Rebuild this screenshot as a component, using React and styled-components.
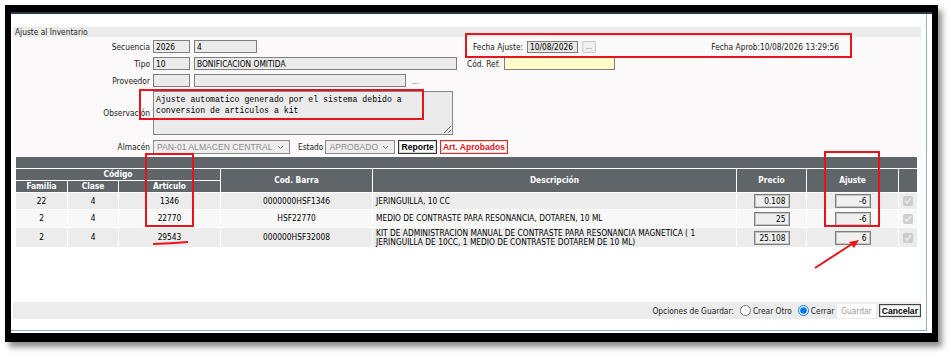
import React from "react";
import styled, { createGlobalStyle } from "styled-components";

const sans = `"DejaVu Sans Condensed", "DejaVu Sans", "Liberation Sans", sans-serif`;
const mono = `"Liberation Mono", "DejaVu Sans Mono", monospace`;

const GlobalStyle = createGlobalStyle`
  body {
    margin: 0;
    background: #fff;
    font-family: ${sans};
    font-size: 8.3px;
    color: #1a1a1a;
  }
`;

const Stage = styled.div`
  position: relative;
  width: 951px;
  height: 360px;
  padding: 5px 0 0 5px;
  box-sizing: border-box;
`;

const Frame = styled.div`
  width: 933px;
  height: 337px;
  box-sizing: border-box;
  background: #000;
  padding: 7px 6px 9px 6px;
  display: flex;
  flex-direction: column;
  box-shadow: 4px 5px 6px rgba(0, 0, 0, 0.45);
`;

const TopLine = styled.div`
  height: 2px;
  background: #2b3a46;
`;

const Window = styled.div`
  flex: 1;
  background: #fff;
  padding: 0 5px 2px 0;
  display: flex;
`;

const Panel = styled.div`
  flex: 1;
  border-right: 1px solid #8fb1c1;
  border-bottom: 1px solid #8fb1c1;
  padding: 13px 5px 11px 2px;
  display: flex;
  flex-direction: column;
`;

const Title = styled.div`
  height: 10px;
  line-height: 10px;
  background: #ececec;
  padding-left: 2px;
  color: #222;
`;

const FormArea = styled.div`
  background: #fbf9f9;
  padding: 3px 0 3px 0;
`;

const Row = styled.div`
  display: flex;
  align-items: center;
  height: ${(p) => p.$h || 13}px;
  margin-bottom: ${(p) => (p.$mb === undefined ? 4 : p.$mb)}px;
`;

const Label = styled.span`
  width: 140px;
  box-sizing: border-box;
  padding-right: 3px;
  text-align: right;
  color: #222;
  flex: none;
`;

const Middle = styled.div`
  width: 310px;
  display: flex;
  align-items: center;
  gap: 4px;
  flex: none;
`;

const Right = styled.div`
  flex: 1;
  display: flex;
  align-items: center;
  gap: 4px;
  padding-left: ${(p) => p.$pl || 0}px;
  padding-right: ${(p) => p.$pr || 0}px;
`;

const Field = styled.input`
  width: ${(p) => p.$w}px;
  height: ${(p) => p.$hh || 13}px;
  box-sizing: border-box;
  border: 1px solid #7e7e7e;
  box-shadow: ${(p) => (p.$deep ? "inset 0 0 0 1px #c4c4c4" : "none")};
  background: ${(p) => p.$bg || "#ebebeb"};
  font-family: ${sans};
  font-size: 8.3px;
  color: #000;
  padding: 0 ${(p) => (p.$align === "right" ? 3 : 2)}px;
  margin: 0;
  outline: none;
  text-align: ${(p) => p.$align || "left"};
  vertical-align: middle;
`;

const Dots = styled.button`
  height: 12px;
  width: 14px;
  padding: 0;
  border: 1px solid #c9c9c9;
  border-radius: 2px;
  background: #f1f1f1;
  color: #555;
  font-size: 7px;
  line-height: 8px;
  font-family: ${sans};
`;

const PlainDots = styled.span`
  color: #555;
  margin-left: 2px;
`;

const Memo = styled.textarea`
  width: 300px;
  height: 44px;
  box-sizing: border-box;
  border: 1px solid #858585;
  background: #ebebeb;
  font-family: ${mono};
  font-size: 8.2px;
  line-height: 11px;
  color: #000;
  padding: 2px 2px;
  margin: 0;
  resize: both;
  outline: none;
`;

const Select = styled.div`
  width: ${(p) => p.$w}px;
  height: 14px;
  box-sizing: border-box;
  border: 1px solid #8a8a8a;
  background: #eeeeee;
  color: #8d8d8d;
  display: flex;
  align-items: center;
  justify-content: space-between;
  padding: 0 5px 0 3px;
  font-family: "Liberation Sans", sans-serif;
  font-size: 8.6px;
  white-space: nowrap;
  overflow: hidden;
  flex: none;
`;

const SmallLabel = styled.span`
  margin: 0 2px 0 ${(p) => p.$ml || 0}px;
  color: #222;
`;

const Btn = styled.button`
  height: 14px;
  padding: 0 2px;
  box-sizing: border-box;
  background: #fff;
  border: 1px solid ${(p) => (p.$red ? "#c33" : "#333")};
  box-shadow: inset 0 0 0 1px #d8d8d8;
  color: ${(p) => (p.$red ? "#e3111a" : "#000")};
  font-family: "Liberation Sans", sans-serif;
  font-weight: bold;
  font-size: 8.6px;
  margin-left: ${(p) => p.$ml || 0}px;
`;

const TableWrap = styled.div`
  padding-left: 2px;
  margin-top: -1px;
`;

const Grid = styled.table`
  width: 903px;
  table-layout: fixed;
  border-collapse: separate;
  border-spacing: 1px;
  background: #fff;
  font-size: 8.3px;
`;

const Th = styled.th`
  background: #5f6569;
  color: #fff;
  font-weight: bold;
  text-align: center;
  height: 11px;
  line-height: 11px;
  padding: 0;
`;

const Tr = styled.tr`
  background: ${(p) => (p.$alt ? "#f8f8f8" : "#ececec")};
  height: ${(p) => p.$h}px;
`;

const Td = styled.td`
  padding: 0 3px;
  text-align: ${(p) => p.$align || "center"};
  color: #000;
  line-height: 9px;
  vertical-align: middle;
`;

const Check = styled.input`
  width: 10px;
  height: 10px;
  margin: 0;
  vertical-align: middle;
`;

const Footer = styled.div`
  margin-top: auto;
  height: 17px;
  background: #ececec;
  display: flex;
  align-items: center;
  justify-content: flex-end;
  color: #222;
`;

const Radio = styled.input`
  width: 11px;
  height: 11px;
  margin: 0 2px 0 6px;
`;

const GhostBtn = styled.span`
  background: #fff;
  color: #9a9a9a;
  padding: 2px 4px;
  margin-left: 3px;
`;

const CancelBtn = styled.button`
  height: 13px;
  padding: 0 2px;
  margin-left: 3px;
  box-sizing: border-box;
  background: #fff;
  border: 1px solid #444;
  box-shadow: inset 0 0 0 1px #d8d8d8;
  font-family: "Liberation Sans", sans-serif;
  font-weight: bold;
  font-size: 8.6px;
  color: #000;
`;

const Marks = styled.svg`
  position: absolute;
  left: 0;
  top: 0;
  pointer-events: none;
`;

const rows = [
  { fam: "22", cla: "4", art: "1346", barra: "0000000HSF1346", desc: "JERINGUILLA, 10 CC", precio: "0.108", ajuste: "-6", h: 16 },
  { fam: "2", cla: "4", art: "22770", barra: "HSF22770", desc: "MEDIO DE CONTRASTE PARA RESONANCIA, DOTAREN, 10 ML", precio: "25", ajuste: "-6", h: 17 },
  {
    fam: "2",
    cla: "4",
    art: "29543",
    barra: "000000HSF32008",
    desc: "KIT DE ADMINISTRACION MANUAL DE CONTRASTE PARA RESONANCIA MAGNETICA ( 1 JERINGUILLA DE 10CC, 1 MEDIO DE CONTRASTE DOTAREM DE 10 ML)",
    precio: "25.108",
    ajuste: "6",
    h: 19,
  },
];

const Chevron = () => (
  <svg width="7" height="5" viewBox="0 0 7 5">
    <path d="M1 1l2.5 2.5L6 1" fill="none" stroke="#777" strokeWidth="1" />
  </svg>
);

export default function App() {
  return (
    <Stage>
      <GlobalStyle />
      <Frame>
        <TopLine />
        <Window>
          <Panel>
            <Title>Ajuste al Inventario</Title>
            <FormArea>
              <Row>
                <Label>Secuencia</Label>
                <Middle>
                  <Field $w={37} readOnly value="2026" />
                  <Field $w={63} readOnly value="4" />
                </Middle>
                <Right $pl={10} $pr={82}>
                  <span>Fecha Ajuste:</span>
                  <Field $w={51} $hh={12} $bg="#e6e6e6" readOnly value="10/08/2026" />
                  <Dots>...</Dots>
                  <span style={{ marginLeft: "auto" }}>Fecha Aprob:10/08/2026 13:29:56</span>
                </Right>
              </Row>
              <Row>
                <Label>Tipo</Label>
                <Middle>
                  <Field $w={37} readOnly value="10" />
                  <Field $w={263} readOnly value="BONIFICACION OMITIDA" />
                </Middle>
                <Right $pl={4}>
                  <span>Cód. Ref.</span>
                  <Field $w={111} $bg="#fffdc9" readOnly value="" />
                </Right>
              </Row>
              <Row>
                <Label>Proveedor</Label>
                <Middle>
                  <Field $w={37} readOnly value="" />
                  <Field $w={212} readOnly value="" />
                  <PlainDots>...</PlainDots>
                </Middle>
              </Row>
              <Row $h={44} $mb={5}>
                <Label>Observación</Label>
                <Memo
                  readOnly
                  value={"Ajuste automatico generado por el sistema debido a\nconversion de articulos a kit"}
                />
              </Row>
              <Row $h={14} $mb={0}>
                <Label>Almacén</Label>
                <Select $w={137}>
                  <span>PAN-01 ALMACEN CENTRAL</span>
                  <Chevron />
                </Select>
                <SmallLabel $ml={8}>Estado</SmallLabel>
                <Select $w={70}>
                  <span>APROBADO</span>
                  <Chevron />
                </Select>
                <Btn $ml={3}>Reporte</Btn>
                <Btn $ml={3} $red>
                  Art. Aprobados
                </Btn>
              </Row>
            </FormArea>
            <TableWrap>
              <Grid>
                <colgroup>
                  <col style={{ width: 51 }} />
                  <col style={{ width: 50 }} />
                  <col style={{ width: 101 }} />
                  <col style={{ width: 151 }} />
                  <col style={{ width: 363 }} />
                  <col style={{ width: 69 }} />
                  <col style={{ width: 91 }} />
                  <col style={{ width: 18 }} />
                </colgroup>
                <thead>
                  <tr>
                    <Th colSpan={8} />
                  </tr>
                  <tr>
                    <Th colSpan={3}>Código</Th>
                    <Th rowSpan={2}>Cod. Barra</Th>
                    <Th rowSpan={2}>Descripción</Th>
                    <Th rowSpan={2}>Precio</Th>
                    <Th rowSpan={2}>Ajuste</Th>
                    <Th rowSpan={2} />
                  </tr>
                  <tr>
                    <Th>Familia</Th>
                    <Th>Clase</Th>
                    <Th>Artículo</Th>
                  </tr>
                </thead>
                <tbody>
                  {rows.map((r, i) => (
                    <Tr key={r.art} $alt={i % 2 === 1} $h={r.h}>
                      <Td>{r.fam}</Td>
                      <Td>{r.cla}</Td>
                      <Td>{r.art}</Td>
                      <Td>{r.barra}</Td>
                      <Td $align="left">{r.desc}</Td>
                      <Td>
                        <Field $w={36} $hh={14} $deep $align="right" $bg="#efefef" readOnly value={r.precio} />
                      </Td>
                      <Td>
                        <Field $w={36} $hh={14} $deep $align="right" $bg="#efefef" readOnly value={r.ajuste} />
                      </Td>
                      <Td style={{ padding: 0 }}>
                        <Check type="checkbox" checked disabled readOnly />
                      </Td>
                    </Tr>
                  ))}
                </tbody>
              </Grid>
            </TableWrap>
            <Footer>
              <span>Opciones de Guardar:</span>
              <Radio type="radio" name="opt" readOnly />
              <span>Crear Otro</span>
              <Radio type="radio" name="opt" checked readOnly />
              <span>Cerrar</span>
              <GhostBtn>Guardar</GhostBtn>
              <CancelBtn>Cancelar</CancelBtn>
            </Footer>
          </Panel>
        </Window>
      </Frame>
      <Marks width="951" height="360" viewBox="0 0 951 360">
        <g fill="none" stroke="#e8141b" strokeWidth="2">
          <rect x="466" y="34" width="385" height="23" />
          <rect x="140" y="90" width="283" height="29" />
          <rect x="146" y="154" width="47" height="72" />
          <rect x="825" y="152" width="54" height="74" />
          <path d="M153 244 Q170 243.5 188 242" />
          <path d="M815 268 L852 244" />
        </g>
        <path d="M859 240 L849 242 L854 248 Z" fill="#e8141b" />
      </Marks>
    </Stage>
  );
}
